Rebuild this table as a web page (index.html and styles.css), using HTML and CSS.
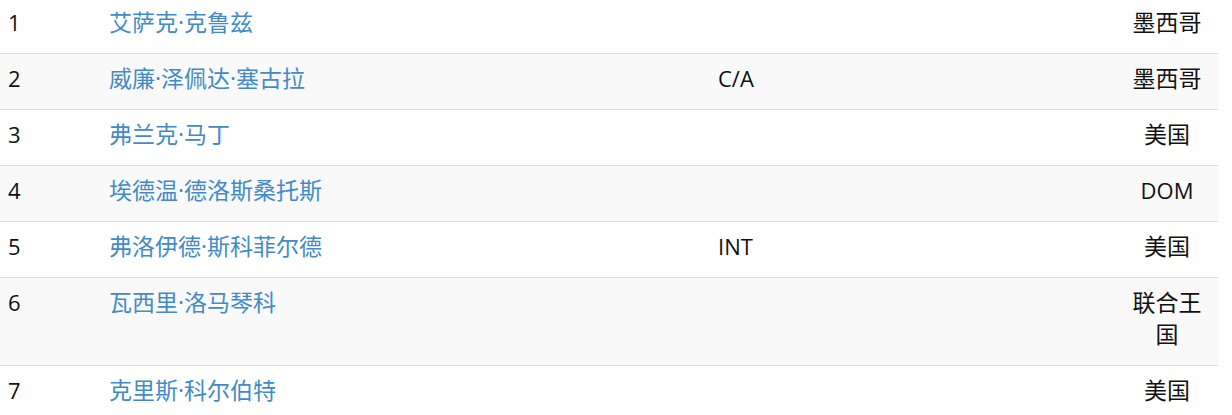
FILE: index.html
```html
<!DOCTYPE html>
<html lang="zh">
<head>
    <meta charset="UTF-8">
    <title>名单</title>
    <link rel="stylesheet" href="styles.css">
</head>
<body>
<table class="roster">
    <colgroup>
        <col class="c-num">
        <col class="c-name">
        <col class="c-pos">
        <col class="c-nat">
    </colgroup>
    <tbody>
        <tr>
            <td>1</td>
            <td class="cjk"><a href="#">艾萨克·克鲁兹</a></td>
            <td></td>
            <td class="nat cjk">墨西哥</td>
        </tr>
        <tr>
            <td>2</td>
            <td class="cjk"><a href="#">威廉·泽佩达·塞古拉</a></td>
            <td>C/A</td>
            <td class="nat cjk">墨西哥</td>
        </tr>
        <tr>
            <td>3</td>
            <td class="cjk"><a href="#">弗兰克·马丁</a></td>
            <td></td>
            <td class="nat cjk">美国</td>
        </tr>
        <tr>
            <td>4</td>
            <td class="cjk"><a href="#">埃德温·德洛斯桑托斯</a></td>
            <td></td>
            <td class="nat">DOM</td>
        </tr>
        <tr>
            <td>5</td>
            <td class="cjk"><a href="#">弗洛伊德·斯科菲尔德</a></td>
            <td>INT</td>
            <td class="nat cjk">美国</td>
        </tr>
        <tr>
            <td>6</td>
            <td class="cjk"><a href="#">瓦西里·洛马琴科</a></td>
            <td></td>
            <td class="nat cjk">联合王国</td>
        </tr>
        <tr>
            <td>7</td>
            <td class="cjk"><a href="#">克里斯·科尔伯特</a></td>
            <td></td>
            <td class="nat cjk">美国</td>
        </tr>
    </tbody>
</table>
</body>
</html>
```

FILE: styles.css
```css
* {
    box-sizing: border-box;
}

html, body {
    margin: 0;
    padding: 0;
}

body {
    font-family: "Open Sans", "Noto Sans CJK SC", sans-serif;
    font-size: 22px;
    line-height: 32px;
    color: #111;
    background: #fff;
}

.roster {
    width: 1218px;
    margin-top: -2px;
    border-collapse: collapse;
    table-layout: fixed;
}

.c-num {
    width: 101px;
}

.c-name {
    width: 609px;
}

.c-pos {
    width: 406px;
}

.c-nat {
    width: 102px;
}

.roster td {
    padding: 8px 8px 15px;
    vertical-align: top;
    border-bottom: 1px solid #ddd;
}

.roster td.cjk {
    font-size: 23px;
}

.roster tr:nth-child(even) td {
    background: #f9f9f9;
}

.roster td.nat {
    text-align: center;
}

.roster a {
    color: #428bca;
    text-decoration: none;
}
```
